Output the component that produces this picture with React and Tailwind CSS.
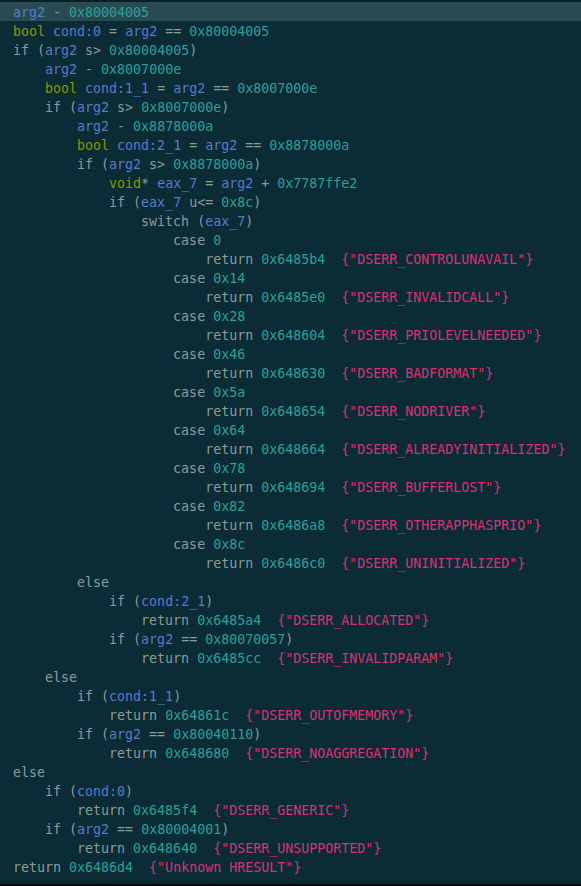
const LINES = [
  [0, 'arg2 - 0x80004005'],
  [0, 'bool cond:0 = arg2 == 0x80004005'],
  [0, 'if (arg2 s> 0x80004005)'],
  [1, 'arg2 - 0x8007000e'],
  [1, 'bool cond:1_1 = arg2 == 0x8007000e'],
  [1, 'if (arg2 s> 0x8007000e)'],
  [2, 'arg2 - 0x8878000a'],
  [2, 'bool cond:2_1 = arg2 == 0x8878000a'],
  [2, 'if (arg2 s> 0x8878000a)'],
  [3, 'void* eax_7 = arg2 + 0x7787ffe2'],
  [3, 'if (eax_7 u<= 0x8c)'],
  [4, 'switch (eax_7)'],
  [5, 'case 0'],
  [6, 'return 0x6485b4  {"DSERR_CONTROLUNAVAIL"}'],
  [5, 'case 0x14'],
  [6, 'return 0x6485e0  {"DSERR_INVALIDCALL"}'],
  [5, 'case 0x28'],
  [6, 'return 0x648604  {"DSERR_PRIOLEVELNEEDED"}'],
  [5, 'case 0x46'],
  [6, 'return 0x648630  {"DSERR_BADFORMAT"}'],
  [5, 'case 0x5a'],
  [6, 'return 0x648654  {"DSERR_NODRIVER"}'],
  [5, 'case 0x64'],
  [6, 'return 0x648664  {"DSERR_ALREADYINITIALIZED"}'],
  [5, 'case 0x78'],
  [6, 'return 0x648694  {"DSERR_BUFFERLOST"}'],
  [5, 'case 0x82'],
  [6, 'return 0x6486a8  {"DSERR_OTHERAPPHASPRIO"}'],
  [5, 'case 0x8c'],
  [6, 'return 0x6486c0  {"DSERR_UNINITIALIZED"}'],
  [2, 'else'],
  [3, 'if (cond:2_1)'],
  [4, 'return 0x6485a4  {"DSERR_ALLOCATED"}'],
  [3, 'if (arg2 == 0x80070057)'],
  [4, 'return 0x6485cc  {"DSERR_INVALIDPARAM"}'],
  [1, 'else'],
  [2, 'if (cond:1_1)'],
  [3, 'return 0x64861c  {"DSERR_OUTOFMEMORY"}'],
  [2, 'if (arg2 == 0x80040110)'],
  [3, 'return 0x648680  {"DSERR_NOAGGREGATION"}'],
  [0, 'else'],
  [1, 'if (cond:0)'],
  [2, 'return 0x6485f4  {"DSERR_GENERIC"}'],
  [1, 'if (arg2 == 0x80004001)'],
  [2, 'return 0x648640  {"DSERR_UNSUPPORTED"}'],
  [0, 'return 0x6486d4  {"Unknown HRESULT"}'],
];

// string, identifier, number, type, everything else
const TOKEN = /(\{".*?"\})|(cond:\w+|arg2|eax_7)|(0x[0-9a-f]+|\b\d+\b)|(\bbool\b|\bvoid\b)|([^]+?(?=\{"|cond:|arg2|eax_7|0x|\b\d|\bbool\b|\bvoid\b|$))/g;

function tokenize(text) {
  const out = [];
  let m;
  TOKEN.lastIndex = 0;
  while ((m = TOKEN.exec(text)) !== null) {
    if (m[0] === '') { TOKEN.lastIndex++; continue; }
    let cls = 'text-[#8a9c9c]';
    if (m[1]) cls = 'text-[#d6336f]';
    else if (m[2]) cls = 'text-[#5a7bc8]';
    else if (m[3]) cls = 'text-[#2aa198]';
    else if (m[4]) cls = 'text-[#859900]';
    out.push({ text: m[0], cls });
  }
  return out;
}

function CodeLine({ indent, text, active }) {
  return (
    <div className={`h-[19px] leading-[21px] pl-[13px] whitespace-pre ${active ? 'bg-[#2a4a51]' : ''}`}>
      {'    '.repeat(indent)}
      {tokenize(text).map((t, i) => (
        <span key={i} className={t.cls}>{t.text}</span>
      ))}
    </div>
  );
}

export default function App() {
  return (
    <div className="w-[581px] h-[886px] bg-[#0b2b35] border-t-2 border-b-2 border-t-[#082028] border-b-[#02090c] overflow-hidden font-['DejaVu_Sans_Mono',monospace] text-[13.3px]">
      {LINES.map(([indent, text], i) => (
        <CodeLine key={i} indent={indent} text={text} active={i === 0} />
      ))}
    </div>
  );
}
